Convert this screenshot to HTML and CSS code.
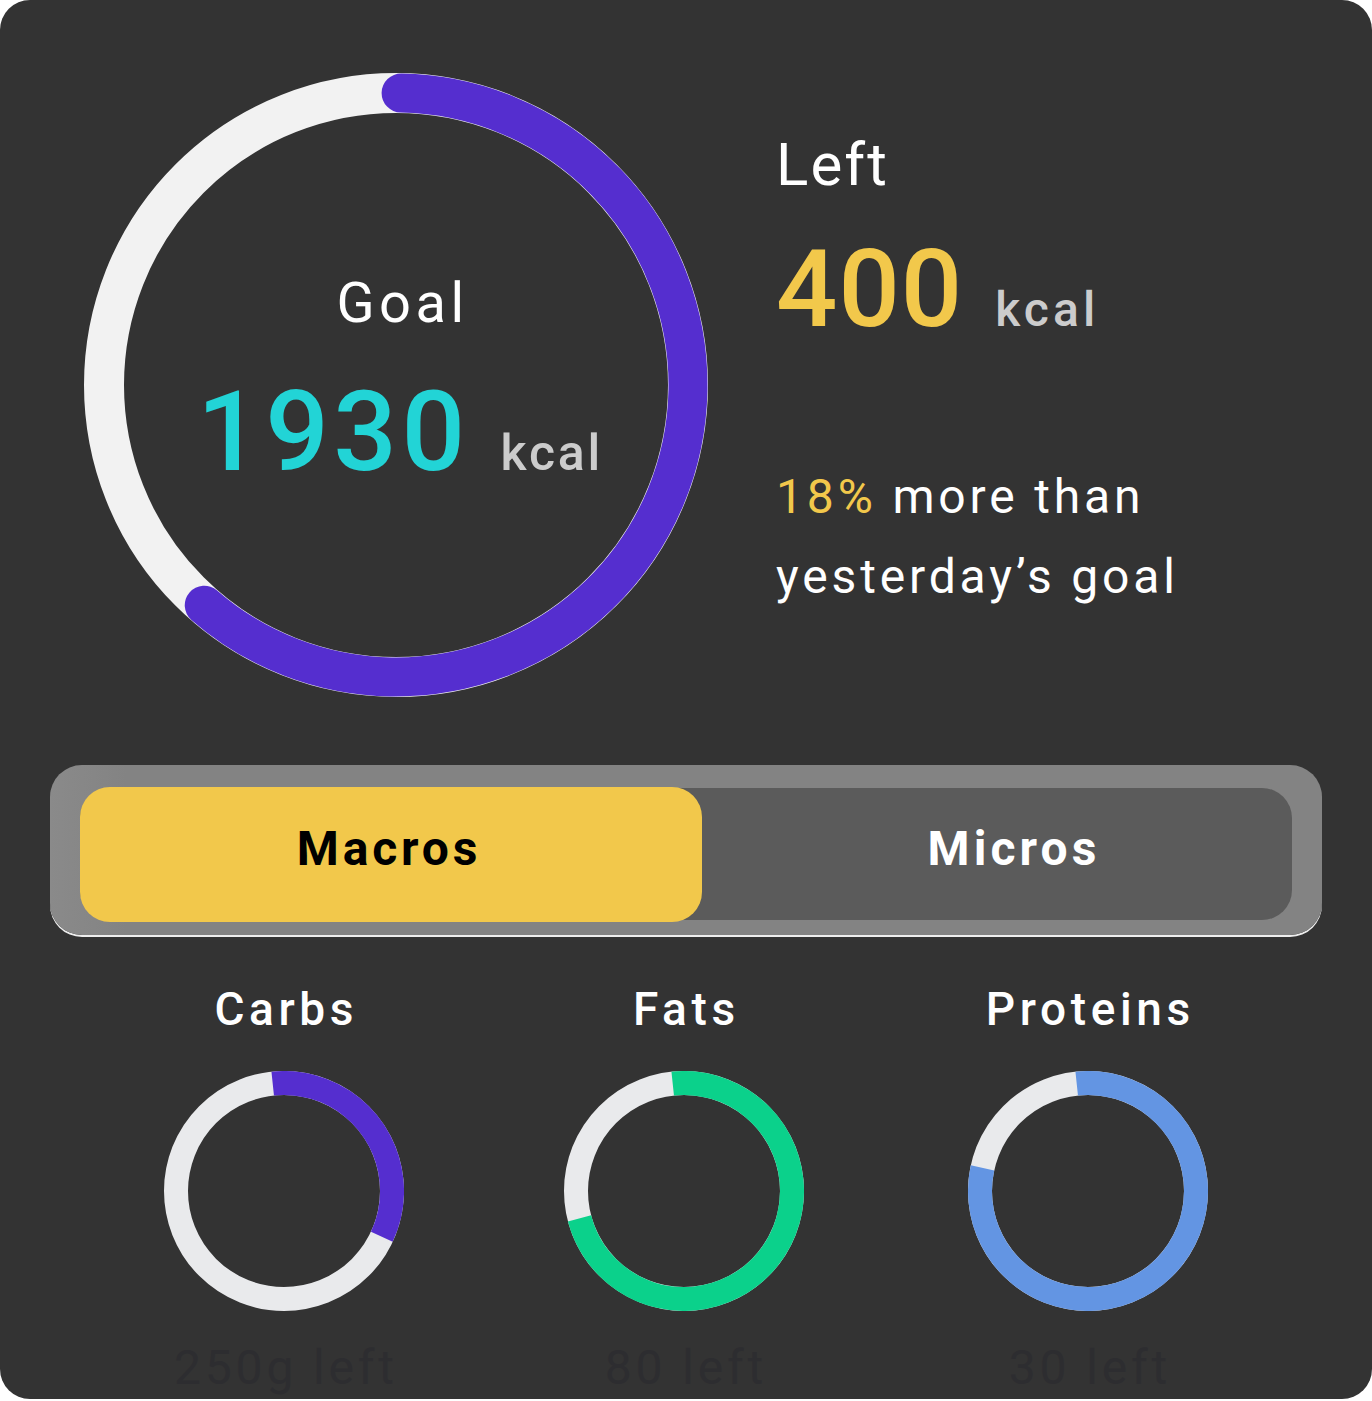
FILE: index.html
```html
<!DOCTYPE html>
<html lang="en">
<head>
<meta charset="utf-8">
<title>Calories</title>
<link rel="stylesheet" href="styles.css">
</head>
<body>
<div class="card">
  <section class="hero">
    <div class="goal-ring">
      <svg class="ring-svg" viewBox="0 0 624 624" width="624" height="624">
        <circle class="track-big" cx="312" cy="312" r="292"/>
        <circle class="arc-big" cx="312" cy="312" r="292" stroke-dasharray="1121 2000" transform="rotate(-89 312 312)"/>
      </svg>
      <div class="goal-text">
        <div class="goal-label">Goal</div>
        <div class="goal-value"><span class="goal-num">1930</span><span class="goal-unit">kcal</span></div>
      </div>
    </div>
    <div class="summary">
      <div class="left-label">Left</div>
      <div class="left-value"><span class="left-num">400</span><span class="left-unit">kcal</span></div>
      <p class="compare"><span class="pct">18%</span> more than<br>yesterday’s goal</p>
    </div>
  </section>

  <div class="toggle">
    <div class="track">
      <div class="tab tab-active">Macros</div>
      <div class="tab tab-idle">Micros</div>
    </div>
  </div>

  <section class="macros">
    <div class="macro">
      <div class="macro-label">Carbs</div>
      <svg class="macro-ring" viewBox="0 0 240 240" width="240" height="240">
        <circle class="track-small" cx="120" cy="120" r="108"/>
        <circle class="arc-small arc-carbs" cx="120" cy="120" r="108" stroke-dasharray="228 1000" transform="rotate(-96 120 120)"/>
      </svg>
      <div class="macro-left">250g left</div>
    </div>
    <div class="macro">
      <div class="macro-label">Fats</div>
      <svg class="macro-ring" viewBox="0 0 240 240" width="240" height="240">
        <circle class="track-small" cx="120" cy="120" r="108"/>
        <circle class="arc-small arc-fats" cx="120" cy="120" r="108" stroke-dasharray="492 1000" transform="rotate(-96 120 120)"/>
      </svg>
      <div class="macro-left">80 left</div>
    </div>
    <div class="macro">
      <div class="macro-label">Proteins</div>
      <svg class="macro-ring" viewBox="0 0 240 240" width="240" height="240">
        <circle class="track-small" cx="120" cy="120" r="108"/>
        <circle class="arc-small arc-proteins" cx="120" cy="120" r="108" stroke-dasharray="543 1000" transform="rotate(-96 120 120)"/>
      </svg>
      <div class="macro-left">30 left</div>
    </div>
  </section>
</div>
</body>
</html>
```

FILE: styles.css
```css
html, body {
  margin: 0;
  padding: 0;
  background: #ffffff;
}

body {
  font-family: Roboto, "Noto Sans", "Liberation Sans", sans-serif;
}

.card {
  width: 1372px;
  height: 1399px;
  box-sizing: border-box;
  padding-top: 73px;
  background: #333333;
  border-radius: 30px;
  overflow: hidden;
}

/* ---------- hero ---------- */
.hero {
  display: flex;
  align-items: flex-start;
  padding-left: 84px;
}

.goal-ring {
  display: grid;
  width: 624px;
  height: 624px;
  flex: none;
}

.goal-ring > * {
  grid-area: 1 / 1;
}

.ring-svg {
  display: block;
}

.track-big {
  fill: none;
  stroke: #f2f2f2;
  stroke-width: 40;
}

.arc-big {
  fill: none;
  stroke: #552ecf;
  stroke-width: 39;
  stroke-linecap: round;
}

.goal-text {
  align-self: start;
  padding-top: 202px;
  text-align: center;
}

.goal-label {
  font-size: 56px;
  line-height: 56px;
  letter-spacing: 0.08em;
  color: #ffffff;
  padding-left: 13px;
}

.goal-value {
  margin-top: 45px;
  padding-left: 8px;
  font-size: 112px;
  line-height: 112px;
  white-space: nowrap;
}

.goal-num {
  color: #22d4d6;
  font-weight: 500;
  letter-spacing: 0.04em;
}

.goal-unit {
  font-size: 50px;
  line-height: 1;
  font-weight: 500;
  color: #cccccc;
  letter-spacing: 0.055em;
  margin-left: 31px;
}

.summary {
  margin-left: 68px;
  padding-top: 62px;
  color: #ffffff;
}

.left-label {
  font-size: 60px;
  line-height: 60px;
  letter-spacing: 0.035em;
}

.left-value {
  margin-top: 40px;
  font-size: 108px;
  line-height: 108px;
  white-space: nowrap;
}

.left-num {
  color: #f2c84b;
  font-weight: 500;
  letter-spacing: 1px;
}

.left-unit {
  font-size: 48px;
  line-height: 1;
  font-weight: 500;
  color: #cccccc;
  letter-spacing: 0.085em;
  margin-left: 32px;
}

.compare {
  margin: 114px 0 0;
  font-size: 48px;
  line-height: 80px;
  letter-spacing: 0.08em;
  white-space: nowrap;
}

.pct {
  color: #f2c84b;
}

/* ---------- toggle ---------- */
.toggle {
  margin: 68px 50px 0;
  height: 170px;
  box-sizing: border-box;
  padding: 23px 30px 15px;
  border-radius: 32px;
  background: linear-gradient(90deg, #8a8a8a 0%, #838383 6%, #838383 100%);
  box-shadow: 0 2px 0 #eeeeee;
}

.track {
  display: flex;
  height: 132px;
  border-radius: 30px;
  background: #5b5b5b;
}

.tab {
  box-sizing: border-box;
  font-size: 48px;
  line-height: 48px;
  font-weight: 700;
  text-align: center;
}

.tab-active {
  width: 622px;
  margin: -1px 0 -2px;
  padding-top: 38px;
  padding-right: 4px;
  background: #f2c84b;
  border-radius: 30px;
  color: #000000;
  letter-spacing: 0.08em;
}

.tab-idle {
  flex: 1;
  padding-top: 37px;
  padding-left: 34px;
  color: #ffffff;
  letter-spacing: 0.085em;
}

/* ---------- macros ---------- */
.macros {
  display: grid;
  grid-template-columns: 400px 400px 408px;
  margin: 51px 0 0 84px;
}

.macro {
  display: flex;
  flex-direction: column;
  align-items: center;
}

.macro-label {
  font-size: 46px;
  line-height: 46px;
  font-weight: 500;
  letter-spacing: 0.1em;
  padding-left: 0.1em;
  color: #ffffff;
}

.macro-ring {
  display: block;
  margin-top: 39px;
}

.track-small {
  fill: none;
  stroke: #e9eaec;
  stroke-width: 24;
}

.arc-small {
  fill: none;
  stroke-width: 24;
}

.arc-carbs {
  stroke: #552ecf;
}

.arc-fats {
  stroke: #0bd18b;
}

.arc-proteins {
  stroke: #6395e3;
}

.macro-left {
  margin-top: 33px;
  font-size: 48px;
  line-height: 48px;
  letter-spacing: 0.08em;
  padding-left: 0.08em;
  color: #2d2d30;
  white-space: nowrap;
}
```
